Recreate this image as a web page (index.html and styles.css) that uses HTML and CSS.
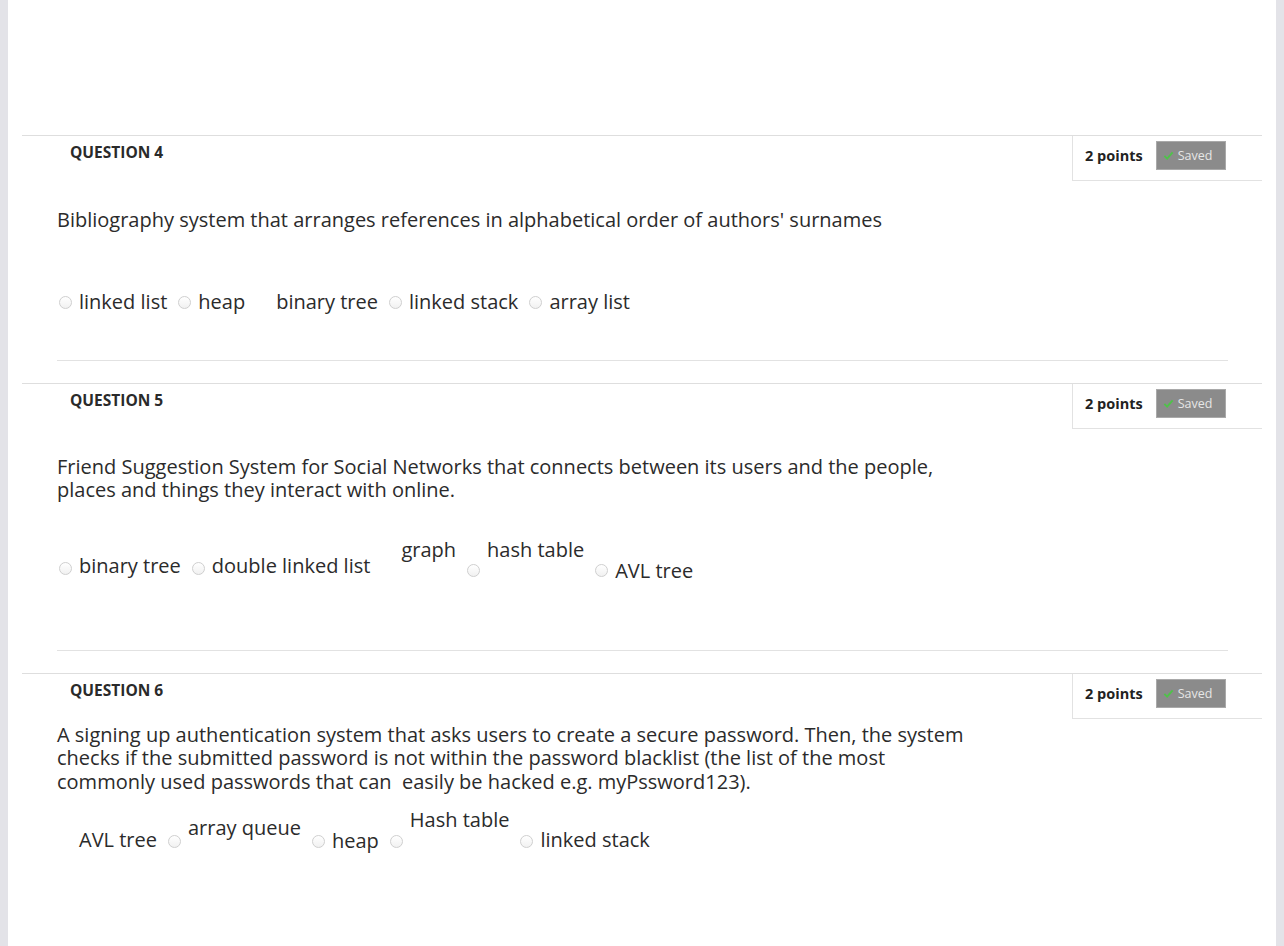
FILE: index.html
```html
<!DOCTYPE html>
<html>
<head>
<meta charset="utf-8">
<link rel="stylesheet" href="styles.css">
</head>
<body>
<div class="panel">
  <div class="question q4">
    <div class="q-head">
      <div class="q-title">QUESTION 4</div>
      <div class="points-box">
        <span class="points">2 points</span>
        <span class="saved"><svg class="check" viewBox="0 0 12 12" width="11" height="11"><path d="M1.5 6.5 L4.5 9.5 L10.5 2.5" fill="none" stroke="#4fc24a" stroke-width="2"/></svg>Saved</span>
      </div>
    </div>
    <div class="q-body">
      <p class="q-text">Bibliography system that arranges references in alphabetical order of authors' surnames</p>
      <div class="options opts-center">
        <span class="opt"><span class="radio"></span><span class="lbl">linked list</span></span>
        <span class="opt"><span class="radio"></span><span class="lbl">heap</span></span>
        <span class="opt"><span class="radio hidden"></span><span class="lbl">binary tree</span></span>
        <span class="opt"><span class="radio"></span><span class="lbl">linked stack</span></span>
        <span class="opt"><span class="radio"></span><span class="lbl">array list</span></span>
      </div>
      <div class="sep"></div>
    </div>
  </div>

  <div class="question q5">
    <div class="q-head">
      <div class="q-title">QUESTION 5</div>
      <div class="points-box">
        <span class="points">2 points</span>
        <span class="saved"><svg class="check" viewBox="0 0 12 12" width="11" height="11"><path d="M1.5 6.5 L4.5 9.5 L10.5 2.5" fill="none" stroke="#4fc24a" stroke-width="2"/></svg>Saved</span>
      </div>
    </div>
    <div class="q-body">
      <p class="q-text">Friend Suggestion System for Social Networks that connects between its users and the people,<br>places and things they interact with online.</p>
      <div class="options">
        <span class="opt"><span class="radio off-24"></span><span class="lbl off-16">binary tree</span></span>
        <span class="opt"><span class="radio off-24"></span><span class="lbl off-16">double linked list</span></span>
        <span class="opt"><span class="radio hidden"></span><span class="lbl">graph</span></span>
        <span class="opt"><span class="radio off-26"></span><span class="lbl">hash table</span></span>
        <span class="opt"><span class="radio off-26"></span><span class="lbl off-21">AVL tree</span></span>
      </div>
      <div class="sep"></div>
    </div>
  </div>

  <div class="question q6">
    <div class="q-head">
      <div class="q-title">QUESTION 6</div>
      <div class="points-box">
        <span class="points">2 points</span>
        <span class="saved"><svg class="check" viewBox="0 0 12 12" width="11" height="11"><path d="M1.5 6.5 L4.5 9.5 L10.5 2.5" fill="none" stroke="#4fc24a" stroke-width="2"/></svg>Saved</span>
      </div>
    </div>
    <div class="q-body">
      <p class="q-text">A signing up authentication system that asks users to create a secure password. Then, the system<br>checks if the submitted password is not within the password blacklist (the list of the most<br>commonly used passwords that can&nbsp; easily be hacked e.g. myPssword123).</p>
      <div class="options">
        <span class="opt"><span class="radio hidden"></span><span class="lbl off-20">AVL tree</span></span>
        <span class="opt"><span class="radio off-27"></span><span class="lbl off-8">array queue</span></span>
        <span class="opt"><span class="radio off-27"></span><span class="lbl off-21">heap</span></span>
        <span class="opt"><span class="radio off-27"></span><span class="lbl">Hash table</span></span>
        <span class="opt"><span class="radio off-27"></span><span class="lbl off-20">linked stack</span></span>
      </div>
    </div>
  </div>
</div>
</body>
</html>
```

FILE: styles.css
```css
html, body {
  margin: 0;
  padding: 0;
}
body {
  background: #e3e3e8;
  font-family: "Open Sans", "Noto Sans", sans-serif;
  color: #2e2e2e;
}
.panel {
  margin: 0 8px;
  background: #ffffff;
  height: 946px;
  padding-top: 135px;
  box-sizing: border-box;
  overflow: hidden;
}
.question {
  margin: 0 14px;
  border-top: 1px solid #dedede;
}
.q-head {
  display: flex;
  justify-content: space-between;
  align-items: flex-start;
}
.q-title {
  font-weight: 700;
  font-size: 15.5px;
  padding-left: 48px;
  padding-top: 5px;
  line-height: 22px;
  color: #2a2a2a;
}
.points-box {
  width: 190px;
  height: 45px;
  border-left: 1px solid #e2e2e2;
  border-bottom: 1px solid #e2e2e2;
  display: flex;
  align-items: flex-start;
  padding-top: 5px;
  box-sizing: border-box;
}
.points {
  font-weight: 700;
  font-size: 14.5px;
  margin-left: 12px;
  margin-top: 6px;
  line-height: 18px;
  color: #222;
}
.saved {
  margin-left: 13px;
  width: 70px;
  height: 29px;
  box-sizing: border-box;
  background: #8b8b8b;
  border: 1px solid #a9a9a9;
  color: #e6e6e6;
  font-size: 12.5px;
  display: flex;
  align-items: center;
  padding-left: 6px;
  gap: 4px;
}
.check {
  display: block;
}
.q-body {
  padding-left: 35px;
}
.q-text {
  margin: 0;
  font-size: 20px;
  line-height: 23.5px;
  color: #2b2b2b;
}
.q4 .q-text { margin-top: 27px; }
.q5 .q-text { margin-top: 26px; }
.q6 .q-text { margin-top: 4px; }
.options {
  display: flex;
  align-items: flex-start;
  gap: 11px;
  margin-left: 2px;
  font-size: 20px;
  line-height: 24px;
}
.opts-center { align-items: center; }
.q4 .options { margin-top: 58px; }
.q5 .options { margin-top: 36px; }
.q6 .options { margin-top: 15px; }
.opt {
  display: inline-flex;
  align-items: flex-start;
  gap: 7px;
}
.opts-center .opt { align-items: center; }
.radio {
  width: 13px;
  height: 13px;
  box-sizing: border-box;
  border-radius: 50%;
  border: 1px solid #cfcfcf;
  background: linear-gradient(#ffffff, #f1f1f1);
  flex: none;
}
.opts-center .radio { margin-top: 2px; }
.radio.hidden { visibility: hidden; }
.lbl { white-space: nowrap; color: #2b2b2b; }
.off-8 { margin-top: 8px; }
.off-16 { margin-top: 16px; }
.off-20 { margin-top: 20px; }
.off-21 { margin-top: 21px; }
.off-24 { margin-top: 24px; }
.off-26 { margin-top: 26px; }
.off-27 { margin-top: 27px; }
.sep {
  height: 1px;
  background: #e2e2e2;
  margin-right: 34px;
}
.q4 .sep { margin-top: 46px; margin-bottom: 22px; }
.q5 .sep { margin-top: 67px; margin-bottom: 22px; }
```
